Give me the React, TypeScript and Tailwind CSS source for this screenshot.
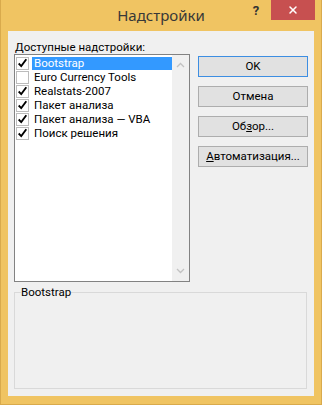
import { X } from "lucide-react"

const addins = [
  { name: "Bootstrap", checked: true },
  { name: "Euro Currency Tools", checked: false },
  { name: "Realstats-2007", checked: true },
  { name: "Пакет анализа", checked: true },
  { name: "Пакет анализа — VBA", checked: true },
  { name: "Поиск решения", checked: true },
]

function CheckBox({ checked }: { checked: boolean }) {
  return (
    <div className="w-[13px] h-[13px] border border-[#bcbcbc] bg-white flex items-center justify-center shrink-0">
      {checked && (
        <svg width="13" height="13" viewBox="0 0 13 13">
          <path d="M2 6.5 L5 9.5 L11 1.5" fill="none" stroke="#000" strokeWidth="2.2" />
        </svg>
      )}
    </div>
  )
}

function Chevron({ up }: { up?: boolean }) {
  return (
    <svg width="9" height="6" viewBox="0 0 9 6">
      <path d={up ? "M1 5 L4.5 1.5 L8 5" : "M1 1 L4.5 4.5 L8 1"} fill="none" stroke="#c2c2c2" strokeWidth="1.3" />
    </svg>
  )
}

function DlgButton({ children, primary }: { children: React.ReactNode; primary?: boolean }) {
  return (
    <button
      className={
        primary
          ? "h-[21px] w-full border border-[#3d8ee2] bg-[#e1e1e1] text-[11.5px] leading-none text-black"
          : "h-[21px] w-full border border-[#adadad] bg-[#e1e1e1] text-[11.5px] leading-none text-black"
      }
    >
      {children}
    </button>
  )
}

export default function App() {
  return (
    <div className="w-[322px] h-[405px] flex flex-col bg-[#f0c462] border-x border-b border-[#d9aa4c] font-['Roboto',sans-serif] text-black">
      <div className="h-[31px] grid grid-cols-[1fr_auto_1fr] shrink-0">
        <div />
        <div className="font-['Noto_Sans',sans-serif] text-[15px] leading-none text-[#383838] pt-[8px]">Надстройки</div>
        <div className="flex justify-end items-start">
          <div className="w-[20px] h-[20px] flex items-center justify-center text-[13px] font-bold text-[#333] mr-[5px] mt-[1px]">?</div>
          <div className="w-[44px] h-[20px] bg-[#c75050] flex items-center justify-center mr-[6px]">
            <X className="w-[12px] h-[12px] text-white" strokeWidth={3} />
          </div>
        </div>
      </div>

      <div className="mx-[7px] h-[365px] bg-[#f0f0f0] flex flex-col px-[6px]">
        <div className="pt-[9px] pl-[1px] text-[11.5px] leading-[14px]">
          Доступные надстройки:
        </div>

        <div className="flex gap-[8px]">
          <div className="w-[176px] h-[228px] border border-[#828282] bg-white flex">
            <div className="flex-1 pt-[1px]">
              {addins.map((a, i) => (
                <div key={i} className="h-[14px] flex items-center pl-[1px]">
                  <CheckBox checked={a.checked} />
                  <div
                    className={
                      i === 0
                        ? "ml-[3px] pl-[2px] flex-1 h-[13px] flex items-center bg-[#3399ff] text-white text-[11.5px] leading-[13px]"
                        : "ml-[3px] pl-[2px] flex-1 h-[13px] flex items-center text-[11.5px] leading-[13px]"
                    }
                  >
                    {a.name}
                  </div>
                </div>
              ))}
            </div>
            <div className="w-[17px] bg-[#f0f0f0] flex flex-col justify-between">
              <div className="h-[20px] flex items-center justify-center">
                <Chevron up />
              </div>
              <div className="h-[20px] flex items-center justify-center">
                <Chevron />
              </div>
            </div>
          </div>

          <div className="w-[110px] mt-[2px] flex flex-col gap-[9px]">
            <DlgButton primary>OK</DlgButton>
            <DlgButton>Отмена</DlgButton>
            <DlgButton>
              Об<span className="underline">з</span>ор...
            </DlgButton>
            <DlgButton>
              <span className="underline">А</span>втоматизация...
            </DlgButton>
          </div>
        </div>

        <fieldset className="mt-[3px] mr-[1px] h-[104px] border border-[#d9d9d9] pl-[6px]">
          <legend className="text-[11.5px] leading-[14px] px-0">Bootstrap</legend>
        </fieldset>
      </div>
    </div>
  )
}
